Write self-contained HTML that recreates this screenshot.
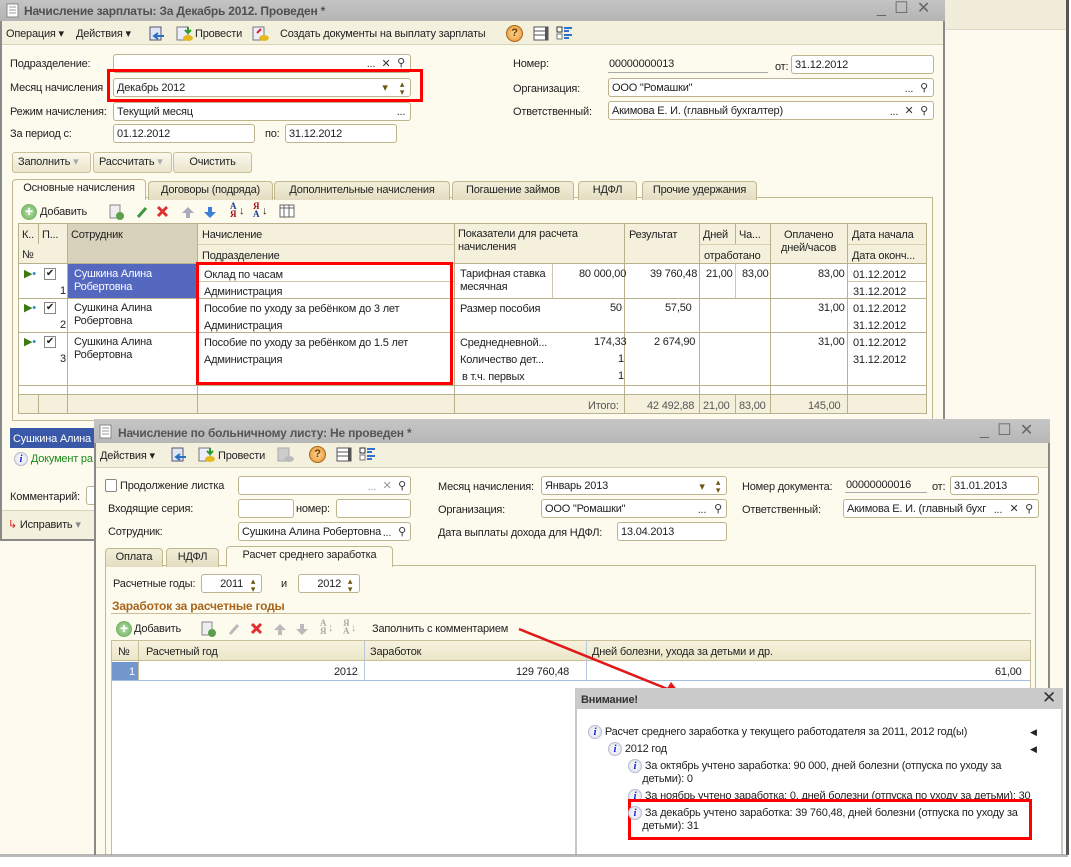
<!DOCTYPE html>
<html><head><meta charset="utf-8"><style>
*{margin:0;padding:0;box-sizing:border-box}
body{width:1071px;height:867px;background:#fff;position:relative;overflow:hidden;font:11px "Liberation Sans",Arial,sans-serif;color:#222;letter-spacing:-0.2px}
.a{position:absolute}
.t{position:absolute;white-space:nowrap;font-size:11px;line-height:14px}
.in{position:absolute;background:#fff;border:1px solid #bdb38e;border-radius:3px;height:19px;padding:2px 3px;font-size:11px;line-height:14px;white-space:nowrap;overflow:hidden}
.btn{position:absolute;border:1px solid #c9bf98;border-radius:3px;background:linear-gradient(#fbf8ec,#ebe5cc);height:21px;line-height:19px;font-size:11px;padding-left:5px}
.tab{position:absolute;border:1px solid #c2b88f;border-bottom:none;border-radius:4px 4px 0 0;background:linear-gradient(#f2eed9,#e4ddc2);height:19px;line-height:17px;text-align:center;font-size:11px}
.tab.on{background:#fdfaee;height:21px}
.red{position:absolute;border:3px solid #f00}
.ii{display:inline-block;width:14px;height:14px;border-radius:50%;background:radial-gradient(#fff,#d8dcea);border:1px solid #b8bcd0;color:#1a2ad0;font:italic bold 11px "Liberation Serif",serif;text-align:center;line-height:12px;vertical-align:middle;letter-spacing:0}
.dots{position:absolute;width:16px;text-align:center;font-size:11px;line-height:14px;color:#333}
</style></head><body>

<div class="a" style="left:0;top:0;width:1068px;height:856px;background:#fefaef"></div>
<div class="a" style="left:945px;top:0;width:123px;height:30px;background:#f1edda;border-bottom:1px solid #e0dac2"></div>
<div class="a" style="left:1066px;top:0;width:3px;height:856px;background:#555"></div>

<!-- MAIN WINDOW -->
<div class="a" style="left:0;top:0;width:945px;height:541px;background:#fdfaee;border:2px solid #8a8a8a;border-top:none"></div>
<div class="a" style="left:0;top:0;width:945px;height:21px;background:linear-gradient(#c4c4c4,#b4b4b4)"></div>
<svg class="a" style="left:6px;top:3px" width="14" height="16"><rect x="1" y="1" width="11" height="13" fill="#fff" stroke="#888"/><path d="M3 4h7M3 7h7M3 10h7" stroke="#999"/></svg>
<div class="t" style="left:24px;top:4px;font-weight:bold;color:#505050;font-size:12px">Начисление зарплаты: За Декабрь 2012. Проведен *</div>
<div class="t" style="left:877px;top:2px;color:#666;font-size:16px">_&nbsp;&nbsp;☐&nbsp;&nbsp;✕</div>
<div class="a" style="left:2px;top:21px;width:941px;height:24px;background:#f3f0de;border-bottom:1px solid #d8d2b8"></div>
<div class="t" style="left:6px;top:27px">Операция ▾</div>
<div class="t" style="left:76px;top:27px">Действия ▾</div>
<svg class="a" style="left:148px;top:25px" width="18" height="17"><rect x="2" y="2" width="11" height="13" fill="#dfe6f2" stroke="#557"/><path d="M6 11h10M10 8l-4 3 4 3" stroke="#2a6fc0" stroke-width="2" fill="none"/></svg>
<svg class="a" style="left:176px;top:25px" width="18" height="17"><rect x="1" y="2" width="11" height="13" fill="#eef" stroke="#777"/><ellipse cx="12" cy="13" rx="5" ry="3" fill="#e6b820"/><path d="M12 2v6M9 5l3 3 3-3" stroke="#2a9a2a" stroke-width="2" fill="none"/></svg>
<div class="t" style="left:195px;top:27px">Провести</div>
<svg class="a" style="left:252px;top:25px" width="18" height="17"><rect x="1" y="2" width="11" height="13" fill="#eef" stroke="#777"/><ellipse cx="12" cy="13" rx="5" ry="3" fill="#e6b820"/><path d="M5 8l4-4" stroke="#d22" stroke-width="2"/></svg>
<div class="t" style="left:280px;top:27px">Создать документы на выплату зарплаты</div>
<div class="a" style="left:506px;top:25px;width:17px;height:17px;border-radius:50%;background:radial-gradient(#fbd79a,#e8922a);border:1px solid #a8661e;text-align:center;font:bold 11px/15px 'Liberation Sans';color:#6a3a00">?</div>
<svg class="a" style="left:533px;top:25px" width="18" height="17"><rect x="1" y="2" width="14" height="13" fill="#fff" stroke="#555"/><path d="M1 6h14M1 10h14" stroke="#555"/><rect x="12" y="2" width="3" height="13" fill="#555"/></svg>
<svg class="a" style="left:556px;top:25px" width="18" height="17"><rect x="1" y="2" width="5" height="5" fill="#fff" stroke="#333"/><rect x="1" y="9" width="5" height="5" fill="#fff" stroke="#777"/><path d="M8 3h8M8 6h5M8 10h8M8 13h5" stroke="#3070d0" stroke-width="2"/></svg>

<div class="t" style="left:10px;top:57px">Подразделение:</div>
<div class="in" style="left:113px;top:54px;width:298px"></div>
<div class="dots" style="left:363px;top:57px">...</div><div class="dots" style="left:378px;top:57px">✕</div><div class="dots" style="left:393px;top:56px">⚲</div>
<div class="t" style="left:10px;top:81px">Месяц начисления</div>
<div class="in" style="left:113px;top:78px;width:298px">Декабрь 2012</div>
<div class="dots" style="left:377px;top:81px;color:#6a5a10">▾</div><div class="dots" style="left:394px;top:80px;font-size:9px;line-height:8px;color:#6a5a10">▴<br>▾</div>
<div class="red" style="left:107px;top:69px;width:316px;height:33px"></div>
<div class="t" style="left:10px;top:105px">Режим начисления:</div>
<div class="in" style="left:113px;top:102px;width:298px">Текущий месяц</div>
<div class="dots" style="left:393px;top:105px">...</div>
<div class="t" style="left:10px;top:127px">За период с:</div>
<div class="in" style="left:113px;top:124px;width:142px">01.12.2012</div>
<div class="t" style="left:265px;top:127px">по:</div>
<div class="in" style="left:285px;top:124px;width:112px">31.12.2012</div>

<div class="t" style="left:513px;top:57px">Номер:</div>
<div class="t" style="left:609px;top:57px">00000000013</div>
<div class="a" style="left:608px;top:72px;width:160px;height:1px;background:#aaa"></div>
<div class="t" style="left:775px;top:60px">от:</div>
<div class="in" style="left:791px;top:55px;width:143px">31.12.2012</div>
<div class="t" style="left:513px;top:82px">Организация:</div>
<div class="in" style="left:608px;top:78px;width:326px">ООО "Ромашки"</div>
<div class="dots" style="left:901px;top:82px">...</div><div class="dots" style="left:916px;top:81px">⚲</div>
<div class="t" style="left:513px;top:105px">Ответственный:</div>
<div class="in" style="left:608px;top:101px;width:326px">Акимова Е. И. (главный бухгалтер)</div>
<div class="dots" style="left:886px;top:105px">...</div><div class="dots" style="left:901px;top:104px">✕</div><div class="dots" style="left:916px;top:104px">⚲</div>

<div class="btn" style="left:12px;top:152px;width:79px">Заполнить <span style="color:#aaa">▾</span></div>
<div class="btn" style="left:93px;top:152px;width:79px">Рассчитать <span style="color:#aaa">▾</span></div>
<div class="btn" style="left:173px;top:152px;width:79px;text-align:center;padding:0">Очистить</div>

<div class="a" style="left:12px;top:197px;width:921px;height:224px;border:1px solid #c2b88f;background:#fdfaee"></div>
<div class="tab on" style="left:12px;top:179px;width:134px">Основные начисления</div>
<div class="tab" style="left:148px;top:181px;width:125px">Договоры (подряда)</div>
<div class="tab" style="left:274px;top:181px;width:176px">Дополнительные начисления</div>
<div class="tab" style="left:452px;top:181px;width:122px">Погашение займов</div>
<div class="tab" style="left:578px;top:181px;width:59px">НДФЛ</div>
<div class="tab" style="left:642px;top:181px;width:115px">Прочие удержания</div>

<div class="a" style="left:21px;top:204px;width:16px;height:16px;border-radius:50%;background:radial-gradient(#bfe6b0,#5aa04a);color:#fff;font:bold 14px/15px 'Liberation Sans';text-align:center">+</div>
<div class="t" style="left:40px;top:205px">Добавить</div>
<svg class="a" style="left:108px;top:203px" width="120" height="18"><rect x="2" y="2" width="10" height="13" fill="#eee" stroke="#888"/><circle cx="12" cy="13" r="4" fill="#5aa04a"/><path d="M30 14l8-9" stroke="#3a9a3a" stroke-width="3"/><path d="M50 4l9 9M59 4l-9 9" stroke="#e03030" stroke-width="3"/><path d="M80 4l-6 6h4v5h4v-5h4z" fill="#aab"/><path d="M102 15l-6-6h4v-5h4v5h4z" fill="#3a80d8"/></svg>
<div class="t" style="left:230px;top:202px;font:bold 9px/8px 'Liberation Serif';color:#1a3a9a">А<br><span style="color:#a01010">Я</span></div><div class="t" style="left:239px;top:204px">↓</div>
<div class="t" style="left:253px;top:202px;font:bold 9px/8px 'Liberation Serif';color:#a01010">Я<br><span style="color:#1a3a9a">А</span></div><div class="t" style="left:262px;top:204px">↓</div>
<svg class="a" style="left:279px;top:204px" width="16" height="15"><rect x="1" y="1" width="14" height="12" fill="#fff" stroke="#666"/><path d="M1 4h14M5 1v12M10 1v12" stroke="#666"/></svg>

<div class="a" style="left:18px;top:223px;width:909px;height:191px;background:#fff;border:1px solid #b9b08c"></div>
<div class="a" style="left:19px;top:224px;width:907px;height:40px;background:#f4f0dc"></div>
<div class="a" style="left:67px;top:224px;width:130px;height:40px;background:#d8d2bc"></div>
<div class="a" style="left:19px;top:394px;width:907px;height:19px;background:#f4f0dc;border-top:1px solid #b9b08c"></div>
<div class="a" style="left:19px;top:263px;width:907px;height:1px;background:#b9b08c"></div>
<div class="a" style="left:197px;top:244px;width:257px;height:1px;background:#d8d0b0"></div>
<div class="a" style="left:699px;top:244px;width:71px;height:1px;background:#d8d0b0"></div>
<div class="a" style="left:847px;top:244px;width:79px;height:1px;background:#d8d0b0"></div>
<div class="a" style="left:19px;top:298px;width:907px;height:1px;background:#b9b08c"></div>
<div class="a" style="left:19px;top:332px;width:907px;height:1px;background:#b9b08c"></div>
<div class="a" style="left:19px;top:385px;width:907px;height:1px;background:#b9b08c"></div>
<div class="a" style="left:197px;top:281px;width:257px;height:1px;background:#cfc8aa"></div>
<div class="a" style="left:847px;top:281px;width:79px;height:1px;background:#cfc8aa"></div>
<div class="a" style="left:38px;top:224px;width:1px;height:20px;background:#b9b08c"></div>
<div class="a" style="left:38px;top:394px;width:1px;height:19px;background:#b9b08c"></div>
<div class="a" style="left:67px;top:224px;width:1px;height:189px;background:#b9b08c"></div>
<div class="a" style="left:197px;top:224px;width:1px;height:189px;background:#b9b08c"></div>
<div class="a" style="left:454px;top:224px;width:1px;height:189px;background:#b9b08c"></div>
<div class="a" style="left:552px;top:264px;width:1px;height:34px;background:#cfc8aa"></div>
<div class="a" style="left:624px;top:224px;width:1px;height:189px;background:#b9b08c"></div>
<div class="a" style="left:699px;top:224px;width:1px;height:189px;background:#b9b08c"></div>
<div class="a" style="left:735px;top:224px;width:1px;height:20px;background:#b9b08c"></div>
<div class="a" style="left:735px;top:264px;width:1px;height:34px;background:#cfc8aa"></div>
<div class="a" style="left:735px;top:394px;width:1px;height:19px;background:#b9b08c"></div>
<div class="a" style="left:770px;top:224px;width:1px;height:189px;background:#b9b08c"></div>
<div class="a" style="left:847px;top:224px;width:1px;height:189px;background:#b9b08c"></div>

<div class="t" style="left:22px;top:228px">К..</div><div class="t" style="left:42px;top:228px">П...</div>
<div class="t" style="left:22px;top:248px">№</div>
<div class="t" style="left:71px;top:228px">Сотрудник</div>
<div class="t" style="left:202px;top:228px">Начисление</div><div class="t" style="left:202px;top:249px">Подразделение</div>
<div class="t" style="left:458px;top:228px;line-height:13px">Показатели для расчета<br>начисления</div>
<div class="t" style="left:629px;top:228px">Результат</div>
<div class="t" style="left:703px;top:228px">Дней</div><div class="t" style="left:739px;top:228px">Ча...</div>
<div class="t" style="left:704px;top:249px">отработано</div>
<div class="t" style="left:781px;top:229px;line-height:13px;text-align:center">Оплачено<br>дней/часов</div>
<div class="t" style="left:852px;top:228px">Дата начала</div><div class="t" style="left:852px;top:249px">Дата оконч...</div>

<div class="a" style="left:68px;top:264px;width:129px;height:34px;background:#5468c0"></div>
<div class="t" style="left:74px;top:268px;color:#fff;line-height:13px">Сушкина Алина<br>Робертовна</div>
<div class="t" style="left:74px;top:302px;line-height:13px">Сушкина Алина<br>Робертовна</div>
<div class="t" style="left:74px;top:336px;line-height:13px">Сушкина Алина<br>Робертовна</div>
<div class="t" style="left:24px;top:267px;color:#3a7a10">▶<span style="color:#2a90c0">•</span></div>
<div class="t" style="left:24px;top:301px;color:#3a7a10">▶<span style="color:#2a90c0">•</span></div>
<div class="t" style="left:24px;top:335px;color:#3a7a10">▶<span style="color:#2a90c0">•</span></div>
<div class="a" style="left:44px;top:268px;width:12px;height:12px;border:1px solid #888;background:#fff;font-size:10px;line-height:10px;text-align:center">✔</div>
<div class="a" style="left:44px;top:302px;width:12px;height:12px;border:1px solid #888;background:#fff;font-size:10px;line-height:10px;text-align:center">✔</div>
<div class="a" style="left:44px;top:336px;width:12px;height:12px;border:1px solid #888;background:#fff;font-size:10px;line-height:10px;text-align:center">✔</div>
<div class="t" style="left:60px;top:284px">1</div><div class="t" style="left:60px;top:318px">2</div><div class="t" style="left:60px;top:352px">3</div>
<div class="t" style="left:204px;top:268px">Оклад по часам</div><div class="t" style="left:204px;top:285px">Администрация</div>
<div class="t" style="left:204px;top:302px">Пособие по уходу за ребёнком до 3 лет</div><div class="t" style="left:204px;top:319px">Администрация</div>
<div class="t" style="left:204px;top:336px">Пособие по уходу за ребёнком до 1.5 лет</div><div class="t" style="left:204px;top:353px">Администрация</div>
<div class="red" style="left:196px;top:262px;width:257px;height:123px"></div>
<div class="t" style="left:460px;top:268px;line-height:13px">Тарифная ставка<br>месячная</div>
<div class="t" style="left:579px;top:267px">80 000,00</div>
<div class="t" style="left:610px;top:301px">50</div>
<div class="t" style="left:460px;top:302px">Размер пособия</div>
<div class="t" style="left:460px;top:336px">Среднедневной...</div><div class="t" style="left:594px;top:335px">174,33</div>
<div class="t" style="left:460px;top:353px">Количество дет...</div><div class="t" style="left:618px;top:352px">1</div>
<div class="t" style="left:462px;top:370px">в т.ч. первых</div><div class="t" style="left:618px;top:369px">1</div>
<div class="t" style="left:650px;top:267px">39 760,48</div><div class="t" style="left:665px;top:301px">57,50</div><div class="t" style="left:654px;top:335px">2 674,90</div>
<div class="t" style="left:706px;top:267px">21,00</div><div class="t" style="left:742px;top:267px">83,00</div>
<div class="t" style="left:818px;top:267px">83,00</div><div class="t" style="left:818px;top:301px">31,00</div><div class="t" style="left:818px;top:335px">31,00</div>
<div class="t" style="left:853px;top:268px">01.12.2012</div><div class="t" style="left:853px;top:285px">31.12.2012</div>
<div class="t" style="left:853px;top:302px">01.12.2012</div><div class="t" style="left:853px;top:319px">31.12.2012</div>
<div class="t" style="left:853px;top:336px">01.12.2012</div><div class="t" style="left:853px;top:353px">31.12.2012</div>
<div class="t" style="left:588px;top:399px;color:#555">Итого:</div>
<div class="t" style="left:647px;top:399px;color:#555">42 492,88</div>
<div class="t" style="left:703px;top:399px;color:#555">21,00</div><div class="t" style="left:739px;top:399px;color:#555">83,00</div>
<div class="t" style="left:808px;top:399px;color:#555">145,00</div>

<div class="a" style="left:10px;top:428px;width:86px;height:20px;background:#3a58a8"></div>
<div class="t" style="left:13px;top:432px;color:#fff">Сушкина Алина</div>
<div class="t" style="left:14px;top:452px"><span class="ii">i</span> <span style="color:#1a8a1a">Документ ра</span></div>
<div class="t" style="left:10px;top:490px">Комментарий:</div>
<div class="in" style="left:86px;top:486px;width:12px"></div>
<div class="a" style="left:2px;top:510px;width:93px;height:29px;background:#f3f0de;border-top:1px solid #d8d2b8"></div>
<div class="t" style="left:8px;top:518px"><span style="color:#d22">↳</span> Исправить <span style="color:#888">▾</span></div>

<!-- SECOND WINDOW -->
<div class="a" style="left:94px;top:419px;width:956px;height:437px;background:#fdfaee;border:2px solid #8a8a8a;border-top:none;border-bottom:none"></div>
<div class="a" style="left:94px;top:419px;width:956px;height:24px;background:linear-gradient(#c6c6c6,#b6b6b6)"></div>
<svg class="a" style="left:99px;top:424px" width="14" height="16"><rect x="1" y="1" width="11" height="13" fill="#fff" stroke="#888"/><path d="M3 4h7M3 7h7M3 10h7" stroke="#999"/></svg>
<div class="t" style="left:118px;top:426px;font-weight:bold;color:#555;font-size:12px">Начисление по больничному листу: Не проведен *</div>
<div class="t" style="left:980px;top:424px;color:#666;font-size:16px">_&nbsp;&nbsp;☐&nbsp;&nbsp;✕</div>
<div class="a" style="left:96px;top:443px;width:952px;height:25px;background:#f3f0de;border-bottom:1px solid #d8d2b8"></div>
<div class="t" style="left:100px;top:449px">Действия ▾</div>
<svg class="a" style="left:170px;top:446px" width="18" height="17"><rect x="2" y="2" width="11" height="13" fill="#dfe6f2" stroke="#557"/><path d="M6 11h10M10 8l-4 3 4 3" stroke="#2a6fc0" stroke-width="2" fill="none"/></svg>
<svg class="a" style="left:198px;top:446px" width="18" height="17"><rect x="1" y="2" width="11" height="13" fill="#eef" stroke="#777"/><ellipse cx="12" cy="13" rx="5" ry="3" fill="#e6b820"/><path d="M12 2v6M9 5l3 3 3-3" stroke="#2a9a2a" stroke-width="2" fill="none"/></svg>
<div class="t" style="left:218px;top:449px">Провести</div>
<svg class="a" style="left:277px;top:446px" width="18" height="17"><rect x="1" y="2" width="11" height="13" fill="#ccc" stroke="#aaa"/><ellipse cx="12" cy="13" rx="5" ry="3" fill="#bbb"/></svg>
<div class="a" style="left:309px;top:446px;width:17px;height:17px;border-radius:50%;background:radial-gradient(#fbd79a,#e8922a);border:1px solid #a8661e;text-align:center;font:bold 11px/15px 'Liberation Sans';color:#6a3a00">?</div>
<svg class="a" style="left:336px;top:446px" width="18" height="17"><rect x="1" y="2" width="14" height="13" fill="#fff" stroke="#555"/><path d="M1 6h14M1 10h14" stroke="#555"/><rect x="12" y="2" width="3" height="13" fill="#555"/></svg>
<svg class="a" style="left:359px;top:446px" width="18" height="17"><rect x="1" y="2" width="5" height="5" fill="#fff" stroke="#333"/><rect x="1" y="9" width="5" height="5" fill="#fff" stroke="#777"/><path d="M8 3h8M8 6h5M8 10h8M8 13h5" stroke="#3070d0" stroke-width="2"/></svg>

<div class="a" style="left:105px;top:479px;width:12px;height:13px;border:1px solid #888;background:#fff;border-radius:2px"></div>
<div class="t" style="left:120px;top:479px">Продолжение листка</div>
<div class="in" style="left:238px;top:476px;width:173px"></div>
<div class="dots" style="left:364px;top:480px;color:#999">...</div><div class="dots" style="left:379px;top:479px;color:#999">✕</div><div class="dots" style="left:394px;top:479px">⚲</div>
<div class="t" style="left:108px;top:502px">Входящие серия:</div>
<div class="in" style="left:238px;top:499px;width:56px"></div>
<div class="t" style="left:296px;top:502px">номер:</div>
<div class="in" style="left:336px;top:499px;width:75px"></div>
<div class="t" style="left:108px;top:525px">Сотрудник:</div>
<div class="in" style="left:238px;top:522px;width:173px">Сушкина Алина Робертовна</div>
<div class="dots" style="left:379px;top:526px">...</div><div class="dots" style="left:394px;top:525px">⚲</div>

<div class="t" style="left:438px;top:480px">Месяц начисления:</div>
<div class="in" style="left:541px;top:476px;width:186px">Январь 2013</div>
<div class="dots" style="left:694px;top:480px;color:#6a5a10">▾</div><div class="dots" style="left:710px;top:478px;font-size:9px;line-height:8px;color:#6a5a10">▴<br>▾</div>
<div class="t" style="left:438px;top:503px">Организация:</div>
<div class="in" style="left:541px;top:499px;width:186px">ООО "Ромашки"</div>
<div class="dots" style="left:694px;top:503px">...</div><div class="dots" style="left:710px;top:502px">⚲</div>
<div class="t" style="left:438px;top:526px">Дата выплаты дохода для НДФЛ:</div>
<div class="in" style="left:617px;top:522px;width:110px">13.04.2013</div>

<div class="t" style="left:742px;top:480px">Номер документа:</div>
<div class="t" style="left:846px;top:478px">00000000016</div>
<div class="a" style="left:845px;top:492px;width:82px;height:1px;background:#aaa"></div>
<div class="t" style="left:932px;top:480px">от:</div>
<div class="in" style="left:950px;top:476px;width:89px">31.01.2013</div>
<div class="t" style="left:742px;top:503px">Ответственный:</div>
<div class="in" style="left:843px;top:499px;width:196px">Акимова Е. И. (главный бухг</div>
<div class="dots" style="left:990px;top:503px">...</div><div class="dots" style="left:1006px;top:502px">✕</div><div class="dots" style="left:1021px;top:502px">⚲</div>

<div class="a" style="left:105px;top:565px;width:931px;height:292px;border:1px solid #c2b88f;border-bottom:none;background:#fdfaee"></div>
<div class="tab" style="left:105px;top:548px;width:58px">Оплата</div>
<div class="tab" style="left:166px;top:548px;width:53px">НДФЛ</div>
<div class="tab on" style="left:226px;top:546px;width:167px">Расчет среднего заработка</div>

<div class="t" style="left:113px;top:577px">Расчетные годы:</div>
<div class="in" style="left:201px;top:574px;width:61px;text-align:right;padding-right:18px">2011</div>
<div class="dots" style="left:245px;top:577px;font-size:9px;line-height:8px;color:#6a5a10">▴<br>▾</div>
<div class="t" style="left:281px;top:577px">и</div>
<div class="in" style="left:298px;top:574px;width:62px;text-align:right;padding-right:18px">2012</div>
<div class="dots" style="left:342px;top:577px;font-size:9px;line-height:8px;color:#6a5a10">▴<br>▾</div>
<div class="t" style="left:112px;top:599px;font-weight:bold;color:#a7661c;font-size:12px">Заработок за расчетные годы</div>
<div class="a" style="left:111px;top:613px;width:920px;height:1px;background:#c8bf98"></div>

<div class="a" style="left:116px;top:621px;width:16px;height:16px;border-radius:50%;background:radial-gradient(#bfe6b0,#5aa04a);color:#fff;font:bold 14px/15px 'Liberation Sans';text-align:center">+</div>
<div class="t" style="left:134px;top:622px">Добавить</div>
<svg class="a" style="left:200px;top:620px" width="120" height="18"><rect x="2" y="2" width="10" height="13" fill="#eee" stroke="#888"/><circle cx="12" cy="13" r="4" fill="#5aa04a"/><path d="M30 14l8-9" stroke="#bbb" stroke-width="3"/><path d="M52 4l9 9M61 4l-9 9" stroke="#e03030" stroke-width="3"/><path d="M80 4l-6 6h4v5h4v-5h4z" fill="#bbb"/><path d="M102 15l-6-6h4v-5h4v5h4z" fill="#bbb"/></svg>
<div class="t" style="left:320px;top:619px;font:bold 9px/8px 'Liberation Serif';color:#aaa">А<br>Я</div><div class="t" style="left:328px;top:621px;color:#aaa">↓</div>
<div class="t" style="left:343px;top:619px;font:bold 9px/8px 'Liberation Serif';color:#aaa">Я<br>А</div><div class="t" style="left:351px;top:621px;color:#aaa">↓</div>
<div class="t" style="left:372px;top:622px">Заполнить с комментарием</div>

<div class="a" style="left:111px;top:640px;width:920px;height:216px;background:#fff;border:1px solid #c8bf98;border-bottom:none"></div>
<div class="a" style="left:112px;top:641px;width:918px;height:20px;background:linear-gradient(#f6f2de,#ece6c8);border-bottom:1px solid #c8bf98"></div>
<div class="a" style="left:138px;top:641px;width:1px;height:40px;background:#c8bf98"></div>
<div class="a" style="left:364px;top:641px;width:1px;height:40px;background:#b8c8e0"></div>
<div class="a" style="left:586px;top:641px;width:1px;height:40px;background:#b8c8e0"></div>
<div class="a" style="left:112px;top:680px;width:918px;height:1px;background:#a8c0e0"></div>
<div class="t" style="left:118px;top:645px">№</div>
<div class="t" style="left:146px;top:645px">Расчетный год</div>
<div class="t" style="left:370px;top:645px">Заработок</div>
<div class="t" style="left:592px;top:645px">Дней болезни, ухода за детьми и др.</div>
<div class="a" style="left:112px;top:662px;width:26px;height:18px;background:#7297cc"></div>
<div class="t" style="left:129px;top:665px;color:#fff">1</div>
<div class="t" style="left:334px;top:665px">2012</div>
<div class="t" style="left:516px;top:665px">129 760,48</div>
<div class="t" style="left:995px;top:665px">61,00</div>

<svg class="a" style="left:515px;top:625px" width="180" height="80"><line x1="4" y1="4" x2="160" y2="67" stroke="#e01818" stroke-width="2.5"/><path d="M168 72l-20-2 8-13z" fill="#e01818"/></svg>

<!-- POPUP -->
<div class="a" style="left:575px;top:688px;width:488px;height:168px;background:#fff;border:2px solid #c8c8c8;border-top:none;border-bottom:none"></div>
<div class="a" style="left:575px;top:688px;width:488px;height:21px;background:#cacaca"></div>
<div class="t" style="left:581px;top:693px;font-weight:bold;color:#333">Внимание!</div>
<div class="t" style="left:1042px;top:689px;font-size:17px;line-height:18px;color:#333">✕</div>
<div class="t" style="left:588px;top:725px"><span class="ii">i</span> Расчет среднего заработка у текущего работодателя за 2011, 2012 год(ы)</div>
<div class="t" style="left:1030px;top:725px;font-size:9px">◀</div>
<div class="t" style="left:608px;top:742px"><span class="ii">i</span> 2012 год</div>
<div class="t" style="left:1030px;top:742px;font-size:9px">◀</div>
<div class="t" style="left:628px;top:759px;line-height:13px"><span class="ii">i</span> За октябрь учтено заработка: 90 000, дней болезни (отпуска по уходу за<br>&nbsp;&nbsp;&nbsp;&nbsp;&nbsp;детьми): 0</div>
<div class="t" style="left:628px;top:789px;width:404px;overflow:hidden"><span class="ii">i</span> За ноябрь учтено заработка: 0, дней болезни (отпуска по уходу за детьми): 30</div>
<div class="a" style="left:628px;top:799px;width:404px;height:3px;background:#f00"></div>
<div class="a" style="left:628px;top:802px;width:404px;height:38px;background:#fff;border:3px solid #f00;border-top:none"></div>
<div class="t" style="left:628px;top:806px;line-height:13px"><span class="ii">i</span> За декабрь учтено заработка: 39 760,48, дней болезни (отпуска по уходу за<br>&nbsp;&nbsp;&nbsp;&nbsp;&nbsp;детьми): 31</div>

<div class="a" style="left:0;top:855px;width:1071px;height:12px;background:#fff"></div>
<div class="a" style="left:0;top:854px;width:1068px;height:3px;background:#888;opacity:.6"></div>
</body></html>
